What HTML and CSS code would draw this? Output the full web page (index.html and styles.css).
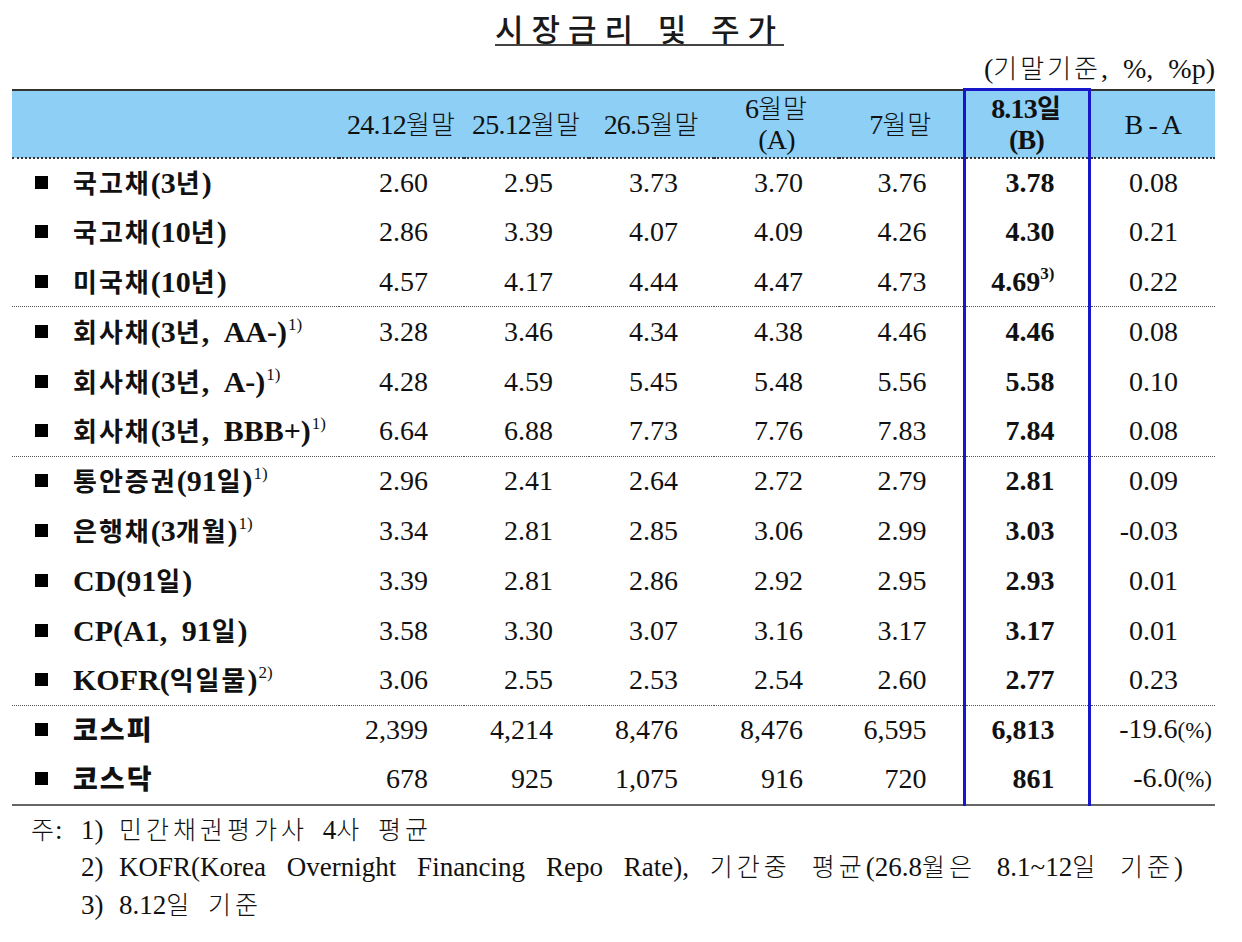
FILE: index.html
```html
<!DOCTYPE html>
<html lang="ko">
<head>
<meta charset="utf-8">
<title>시장금리 및 주가</title>
<link rel="stylesheet" href="styles.css">
</head>
<body>
<div class="page">
  <h1 class="title"><span>시장금리 및 주가</span></h1>
  <div class="unit">(<span class="k">기말기준</span>, %, %p)</div>
  <table class="rates">
    <colgroup>
      <col class="c-label"><col class="c-num"><col class="c-num"><col class="c-num"><col class="c-num"><col class="c-num"><col class="c-num"><col class="c-diff">
    </colgroup>
    <thead>
      <tr>
        <th></th>
        <th>24.12<span class="k">월말</span></th>
        <th>25.12<span class="k">월말</span></th>
        <th>26.5<span class="k">월말</span></th>
        <th>6<span class="k">월말</span><br>(A)</th>
        <th>7<span class="k">월말</span></th>
        <th class="hl hl-top"><b>8.13<span class="k">일</span><br>(B)</b></th>
        <th>B - A</th>
      </tr>
    </thead>
    <tbody>
      <tr>
        <td class="lbl"><i class="sq"></i><span class="k">국고채</span>(3<span class="k">년</span>)</td>
        <td>2.60</td><td>2.95</td><td>3.73</td><td>3.70</td><td>3.76</td><td class="hl">3.78</td><td class="diff">0.08</td>
      </tr>
      <tr>
        <td class="lbl"><i class="sq"></i><span class="k">국고채</span>(10<span class="k">년</span>)</td>
        <td>2.86</td><td>3.39</td><td>4.07</td><td>4.09</td><td>4.26</td><td class="hl">4.30</td><td class="diff">0.21</td>
      </tr>
      <tr class="sep">
        <td class="lbl"><i class="sq"></i><span class="k">미국채</span>(10<span class="k">년</span>)</td>
        <td>4.57</td><td>4.17</td><td>4.44</td><td>4.47</td><td>4.73</td><td class="hl">4.69<sup class="nb">3)</sup></td><td class="diff">0.22</td>
      </tr>
      <tr>
        <td class="lbl"><i class="sq"></i><span class="k">회사채</span>(3<span class="k">년</span>, AA-)<sup>1)</sup></td>
        <td>3.28</td><td>3.46</td><td>4.34</td><td>4.38</td><td>4.46</td><td class="hl">4.46</td><td class="diff">0.08</td>
      </tr>
      <tr>
        <td class="lbl"><i class="sq"></i><span class="k">회사채</span>(3<span class="k">년</span>, A-)<sup>1)</sup></td>
        <td>4.28</td><td>4.59</td><td>5.45</td><td>5.48</td><td>5.56</td><td class="hl">5.58</td><td class="diff">0.10</td>
      </tr>
      <tr class="sep">
        <td class="lbl"><i class="sq"></i><span class="k">회사채</span>(3<span class="k">년</span>, BBB+)<sup>1)</sup></td>
        <td>6.64</td><td>6.88</td><td>7.73</td><td>7.76</td><td>7.83</td><td class="hl">7.84</td><td class="diff">0.08</td>
      </tr>
      <tr>
        <td class="lbl"><i class="sq"></i><span class="k">통안증권</span>(91<span class="k">일</span>)<sup>1)</sup></td>
        <td>2.96</td><td>2.41</td><td>2.64</td><td>2.72</td><td>2.79</td><td class="hl">2.81</td><td class="diff">0.09</td>
      </tr>
      <tr>
        <td class="lbl"><i class="sq"></i><span class="k">은행채</span>(3<span class="k">개월</span>)<sup>1)</sup></td>
        <td>3.34</td><td>2.81</td><td>2.85</td><td>3.06</td><td>2.99</td><td class="hl">3.03</td><td class="diff">-0.03</td>
      </tr>
      <tr>
        <td class="lbl"><i class="sq"></i>CD(91<span class="k">일</span>)</td>
        <td>3.39</td><td>2.81</td><td>2.86</td><td>2.92</td><td>2.95</td><td class="hl">2.93</td><td class="diff">0.01</td>
      </tr>
      <tr>
        <td class="lbl"><i class="sq"></i>CP(A1, 91<span class="k">일</span>)</td>
        <td>3.58</td><td>3.30</td><td>3.07</td><td>3.16</td><td>3.17</td><td class="hl">3.17</td><td class="diff">0.01</td>
      </tr>
      <tr class="sep">
        <td class="lbl"><i class="sq"></i>KOFR(<span class="k">익일물</span>)<sup>2)</sup></td>
        <td>3.06</td><td>2.55</td><td>2.53</td><td>2.54</td><td>2.60</td><td class="hl">2.77</td><td class="diff">0.23</td>
      </tr>
      <tr>
        <td class="lbl heavy"><i class="sq"></i><span class="k">코스피</span></td>
        <td>2,399</td><td>4,214</td><td>8,476</td><td>8,476</td><td>6,595</td><td class="hl">6,813</td><td class="diff">-19.6<span class="pct">(%)</span></td>
      </tr>
      <tr class="last">
        <td class="lbl heavy"><i class="sq"></i><span class="k">코스닥</span></td>
        <td>678</td><td>925</td><td>1,075</td><td>916</td><td>720</td><td class="hl hl-bottom">861</td><td class="diff">-6.0<span class="pct">(%)</span></td>
      </tr>
    </tbody>
  </table>
  <div class="notes">
    <div class="note"><span class="mark"><span class="k">주</span>:</span><span class="num">1)</span><span class="k">민간채권평가사</span> 4<span class="k">사</span> <span class="k">평균</span></div>
    <div class="note note-just"><span class="num">2)</span>KOFR(Korea Overnight Financing Repo Rate), <span class="k">기간중</span> <span class="k">평균</span>(26.8<span class="k">월은</span> 8.1~12<span class="k">일</span> <span class="k">기준</span>)</div>
    <div class="note"><span class="num">3)</span>8.12<span class="k">일</span> <span class="k">기준</span></div>
  </div>
</div>
</body>
</html>
```

FILE: styles.css
```css
html, body {
  margin: 0;
  padding: 0;
  background: #ffffff;
}

body {
  color: #111111;
  font-family: "Liberation Serif", "Noto Sans CJK KR", serif;
}

.k {
  font-family: "Noto Sans CJK KR", sans-serif;
  line-height: 1;
}

.page {
  width: 1203px;
  padding-left: 12px;
}

.title {
  margin: 0;
  padding-top: 12px;
  height: 34px;
  text-align: center;
  font-family: "Noto Sans CJK KR", sans-serif;
  font-weight: 500;
  font-size: 31px;
  line-height: 32px;
  letter-spacing: 8px;
  word-spacing: 0;
  color: #1a1a1a;
}

.title span {
  display: inline-block;
  vertical-align: top;
  border-bottom: 2px solid #444444;
  margin-left: 44px;
  margin-right: -8px;
}

.unit {
  margin-top: 8px;
  margin-bottom: 6px;
  height: 28px;
  text-align: right;
  font-size: 28px;
  line-height: 28px;
  word-spacing: 8px;
}

.unit .k {
  font-size: 26px;
  font-weight: 300;
  letter-spacing: 3px;
}

.rates {
  width: 1203px;
  border-collapse: collapse;
  table-layout: fixed;
}

.c-label { width: 327px; }
.c-num { width: 125px; }
.c-diff { width: 126px; }

.rates thead tr {
  height: 68px;
}

.rates th {
  background: #8dcff5;
  border-top: 2px solid #333333;
  border-bottom: 2px dotted #333333;
  font-weight: 400;
  font-size: 28px;
  line-height: 31px;
  padding: 1px 0 0;
  text-align: center;
  color: #111111;
  letter-spacing: -0.8px;
}

.rates th .k {
  font-size: 26px;
  font-weight: 300;
  letter-spacing: 1px;
}

.rates th b {
  font-weight: 700;
}

.rates th b .k {
  font-weight: 700;
}

.rates tbody tr {
  height: 49.8px;
}

.rates td {
  padding: 0 36px 0 0;
  text-align: right;
  font-size: 28px;
  line-height: 30px;
  white-space: nowrap;
  color: #111111;
}

.rates tr.sep td {
  border-bottom: 1px dotted #555555;
}

.rates tr.last td {
  border-bottom: 2px solid #666666;
}

.rates td.lbl {
  text-align: left;
  padding: 0 0 0 23px;
  font-weight: 700;
  font-size: 30px;
  word-spacing: 7px;
  overflow: visible;
}

.rates td.lbl .k {
  font-size: 26px;
  letter-spacing: 2px;
}

.rates td.heavy .k {
  font-weight: 900;
  font-size: 27px;
}

.sq {
  display: inline-block;
  width: 13px;
  height: 13px;
  background: #000000;
  margin-right: 25px;
  vertical-align: 4px;
}

sup {
  font-size: 17px;
  line-height: 0;
  vertical-align: 12px;
  font-weight: 400;
  margin-left: 1px;
}

sup.nb {
  font-weight: 700;
  margin-left: 0;
}

.rates .hl {
  border-left: 3px solid #1717c9;
  border-right: 3px solid #1717c9;
  font-weight: 700;
  padding-right: 33px;
}

.rates th.hl {
  padding-right: 0;
}

.rates .hl-top {
  border-top: 3px solid #1717c9;
}

.rates .hl-bottom {
  border-bottom: 3px solid #1717c9;
}

.rates td.diff {
  padding-right: 37px;
}

.pct {
  font-size: 23px;
  margin-right: -34px;
}

.notes {
  padding-top: 6px;
  font-size: 27px;
  line-height: 37.5px;
  color: #111111;
}

.notes .k {
  font-size: 25px;
  font-weight: 300;
  letter-spacing: 4px;
}

.note {
  padding-left: 69px;
  word-spacing: 8px;
}

.note .mark {
  display: inline-block;
  width: 50px;
  margin-left: -50px;
}

.note .mark .k {
  letter-spacing: 1px;
}

.note .num {
  display: inline-block;
  width: 38px;
}

.note-just {
  width: 1102px;
  text-align: justify;
  text-align-last: justify;
  word-spacing: 0;
}
```
